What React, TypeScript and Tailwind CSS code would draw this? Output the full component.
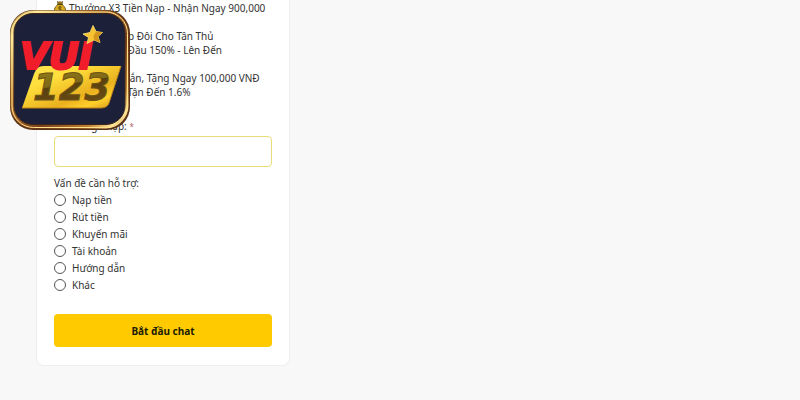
import React from "react";

const topics = ["Nạp tiền", "Rút tiền", "Khuyến mãi", "Tài khoản", "Hướng dẫn", "Khác"];

const MoneyBag: React.FC = () => (
  <svg viewBox="0 0 12 14" className="mr-[3px] inline-block h-3.5 w-3 align-bottom" aria-hidden="true">
    <path d="M3.5 0.5 5 1.4 6 0.5 7.2 1.4 8.6 0.5 7.8 4H4.2Z" fill="#c99a18" stroke="#584612" strokeWidth="0.8" />
    <path
      d="M4.2 3h3.6c1.5 1.8 3.8 3.4 3.8 6 0 1.8-1 2.8-2.6 2.8H3C1.4 11.8 0.4 10.8 0.4 9 0.4 6.4 2.7 4.8 4.2 3Z"
      fill="#d9aa1c"
      stroke="#584612"
      strokeWidth="0.8"
    />
    <path d="M3.8 3.3h4.4" stroke="#3f340f" strokeWidth="1" />
    <path
      d="M7.5 6.2C6 5.3 4.4 6 4.7 7.2s2.7.6 2.7 2c0 1.2-1.8 1.4-3 .7M6 5v6"
      fill="none"
      stroke="#584612"
      strokeWidth="0.9"
    />
  </svg>
);

const Gift: React.FC = () => (
  <svg viewBox="0 0 12 14" className="mr-[3px] inline-block h-3.5 w-3 align-bottom" aria-hidden="true">
    <path d="M1 6h10v7H1Z" fill="#e0a91e" />
    <path d="M0.5 4h11v2.5H0.5Z" fill="#c68b16" />
    <path d="M6 4v9M6 4C2 3 3 0.5 6 4c3-3.5 4-1 0 0" fill="none" stroke="#b5302a" strokeWidth="1.2" />
  </svg>
);

const Logo: React.FC = () => (
  <svg
    viewBox="0 0 124 124"
    className="pointer-events-none absolute top-2 left-2 size-31"
    role="img"
    aria-label="VUI 123"
  >
    <defs>
      <linearGradient id="frame" x1="0" y1="0" x2="1" y2="1">
        <stop offset="0" stopColor="#a77a27" />
        <stop offset="0.12" stopColor="#fff0a5" />
        <stop offset="0.35" stopColor="#b77a31" />
        <stop offset="0.62" stopColor="#7b401c" />
        <stop offset="0.82" stopColor="#c08032" />
        <stop offset="0.92" stopColor="#ffe89b" />
        <stop offset="1" stopColor="#703818" />
      </linearGradient>
      <linearGradient id="plate" x1="0" y1="0" x2="1" y2="1">
        <stop offset="0" stopColor="#ffe552" />
        <stop offset="0.3" stopColor="#ffdf3c" />
        <stop offset="0.65" stopColor="#eab01e" />
        <stop offset="0.8" stopColor="#ffd02b" />
        <stop offset="1" stopColor="#c98b18" />
      </linearGradient>
      <linearGradient id="digits" x1="0" y1="0" x2="0.3" y2="1">
        <stop offset="0" stopColor="#958018" />
        <stop offset="0.5" stopColor="#806817" />
        <stop offset="0.52" stopColor="#58400f" />
        <stop offset="1" stopColor="#6b4c14" />
      </linearGradient>
    </defs>
    <rect x="2" y="2" width="120" height="120" rx="23" fill="#5c3217" />
    <rect x="2.5" y="2.5" width="118" height="118" rx="23" fill="url(#frame)" />
    <rect x="4" y="4" width="115.5" height="115.5" rx="21.5" fill="none" stroke="#ffe18a" strokeWidth="1" />
    <rect x="6" y="5.5" width="111" height="111" rx="19" fill="#1c2038" stroke="#3a251c" strokeWidth="1" />
    <path d="M36 58h77l-12 37c-2 5-6 5-12 5H14l12-34c2-5 4-8 10-8Z" fill="url(#plate)" />
    <path d="M14 100h75c6 0 10 0 12-5l12-37" fill="none" stroke="#bd8218" strokeWidth="1" />
    <g fontFamily="'DejaVu Sans', sans-serif" fontWeight="700" fontStyle="italic">
      <text x="12" y="61" fontSize="37" fill="#f11d2b" stroke="#f11d2b" strokeWidth="2">
        VUI
      </text>
      <text x="25" y="92" fontSize="37" fill="url(#digits)" stroke="#6f5614" strokeWidth="1">
        123
      </text>
    </g>
    <path
      d="M85 17.5 88 23.5 94.5 24.5 90 28.5 92 34.5 86 32 79 35.5 80.5 29.5 75 26 82 24.5Z"
      fill="#f7c331"
      stroke="#ffe47a"
      strokeWidth="0.8"
    />
    <path d="M85.5 28 88 23.5l6.5 1-4.5 4 2 6-6-2.5Z" fill="#d5961c" />
  </svg>
);

const App: React.FC = () => {
  return (
    <main className="relative min-h-screen bg-[#f8f8f8] px-9 pb-9 font-['Noto_Sans','Open_Sans',sans-serif] text-[10px] leading-3.5 text-[#333333]">
      <form
        className="w-full max-w-[254px] rounded-b-lg border border-t-0 border-[#eeeeee] bg-white px-[17px] pt-px pb-[18px]"
        onSubmit={(event) => event.preventDefault()}
      >
        {/* Promotions */}
        <div className="flex flex-col gap-3.5 whitespace-nowrap">
          <p>
            <MoneyBag />
            Thưởng X3 Tiền Nạp - Nhận Ngay 900,000
          </p>
          <p>
            <Gift />
            Thưởng Nhập Đôi Cho Tân Thủ
            <br />
            Thưởng Từ Lần Đầu 150% - Lên Đến
          </p>
          <p>
            <Gift />
            Theo Bạn Nhắn, Tặng Ngay 100,000 VNĐ
            <br />
            Nhận Hoàn Trả Tận Đến 1.6%
          </p>
        </div>

        {/* Account name */}
        <label htmlFor="username" className="mt-5 mb-0.5 block">
          Tên đăng nhập: <span className="text-[8px] text-[#b06a6a]">*</span>
        </label>
        <input
          id="username"
          type="text"
          required
          className="block h-[31px] w-full rounded border border-[#eadc79] bg-white px-2 outline-none focus:border-[#ffcb00]"
        />

        {/* Support topic */}
        <fieldset className="mt-[9px]">
          <legend className="mb-[3px]">Vấn đề cần hỗ trợ:</legend>
          <div className="flex flex-col gap-[3px]">
            {topics.map((topic) => (
              <label key={topic} className="flex items-center gap-1.5">
                <input
                  type="radio"
                  name="topic"
                  value={topic}
                  className="size-3 appearance-none rounded-full border border-[#555555] bg-white checked:border-4 checked:border-[#ffcb00]"
                />
                {topic}
              </label>
            ))}
          </div>
        </fieldset>

        <button type="submit" className="mt-[22px] h-[33px] w-full rounded bg-[#ffcb00] font-bold text-[#211b05]">
          Bắt đầu chat
        </button>
      </form>
      <Logo />
    </main>
  );
};

export default App;
